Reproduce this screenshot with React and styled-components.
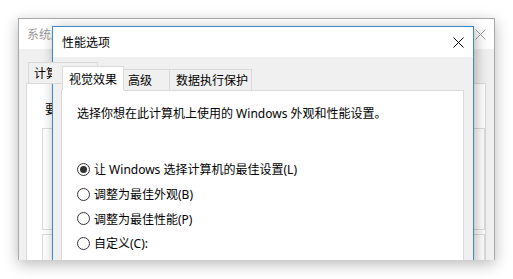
import React from "react";
import styled, { createGlobalStyle } from "styled-components";

const GlobalStyle = createGlobalStyle`
  html, body {
    margin: 0;
    padding: 0;
    background: #fff;
  }
  body {
    font-family: "Noto Sans", "Noto Sans CJK SC", sans-serif;
    font-size: 12px;
    color: #000;
  }
`;

const Stage = styled.div`
  position: relative;
  width: 513px;
  height: 279px;
  overflow: hidden;
`;

const Capture = styled.div`
  position: absolute;
  left: 18px;
  top: 18px;
  width: 477px;
  height: 242px;
  overflow: hidden;
  box-shadow: 0 4px 14px rgba(0, 0, 0, 0.28);
`;

const BackWindow = styled.div`
  display: flex;
  flex-direction: column;
  height: 100%;
  box-sizing: border-box;
  border: 1px solid #a8a8a8;
  border-bottom: none;
  background: #f0f0f0;
`;

const TitleBar = styled.div`
  display: flex;
  align-items: center;
  justify-content: space-between;
  height: ${(p) => p.$h}px;
  padding: 0 ${(p) => p.$right}px 0 ${(p) => p.$left}px;
  background: #fff;
  color: ${(p) => (p.$inactive ? "#9a9a9a" : "#000")};
  flex-shrink: 0;
`;

/* text of the back window that the front window covers: only the visible part is kept */
const Clip = styled.span`
  display: block;
  max-width: ${(p) => p.$w}px;
  overflow: hidden;
  white-space: nowrap;
`;

const Body = styled.div`
  flex: 1;
  display: flex;
  flex-direction: column;
  padding: ${(p) => p.$pad};
`;

const TabRow = styled.div`
  display: flex;
  align-items: flex-end;
  height: ${(p) => p.$h}px;
  padding-left: ${(p) => p.$indent}px;
  margin-bottom: -1px;
  position: relative;
  z-index: 1;
`;

const Tab = styled.div`
  box-sizing: border-box;
  display: flex;
  align-items: center;
  width: ${(p) => p.$w}px;
  height: ${(p) => (p.$active ? 25 : 22)}px;
  padding-left: ${(p) => p.$padl}px;
  margin-left: ${(p) => (p.$first ? 0 : -1)}px;
  background: ${(p) => (p.$active ? "#fff" : "#f0f0f0")};
  border: 1px solid #d9d9d9;
  border-bottom: ${(p) => (p.$active ? "1px solid #fff" : "1px solid #d9d9d9")};
  white-space: nowrap;
  overflow: hidden;
  position: relative;
  z-index: ${(p) => (p.$active ? 2 : 1)};
`;

const Panel = styled.div`
  flex: 1;
  background: #fff;
  border: 1px solid #d9d9d9;
  border-bottom: none;
  padding: ${(p) => p.$pad};
  display: flex;
  flex-direction: column;
`;

const GroupBox = styled.div`
  border: 1px solid #dcdcdc;
  height: ${(p) => p.$h}px;
  margin-top: ${(p) => p.$mt}px;
`;

const FrontWindow = styled.div`
  position: absolute;
  left: 34px;
  top: 8px;
  width: 422px;
  height: 240px;
  box-sizing: border-box;
  border: 1px solid #3d8ac6;
  border-bottom: none;
  background: #f0f0f0;
  display: flex;
  flex-direction: column;
  box-shadow: 2px 2px 12px rgba(0, 0, 0, 0.3);
`;

const Desc = styled.div`
  line-height: 16px;
  white-space: nowrap;
  padding-left: ${(p) => p.$indent || 0}px;
`;

const RadioList = styled.div`
  display: flex;
  flex-direction: column;
  margin-top: 35px;
`;

const RadioRow = styled.label`
  display: flex;
  align-items: center;
  gap: 4px;
  height: 24.7px;
  white-space: nowrap;
`;

const RadioDot = styled.span`
  box-sizing: border-box;
  width: 13px;
  height: 13px;
  border-radius: 50%;
  border: 1px solid #333;
  background: #fff;
  display: flex;
  align-items: center;
  justify-content: center;
  &::after {
    content: "";
    display: ${(p) => (p.$checked ? "block" : "none")};
    width: 7px;
    height: 7px;
    border-radius: 50%;
    background: #333;
  }
`;

const Close = ({ color }) => (
  <svg width="11" height="11" viewBox="0 0 11 11">
    <path d="M0.5 0.5 L10.5 10.5 M10.5 0.5 L0.5 10.5" stroke={color} strokeWidth="1" fill="none" />
  </svg>
);

const options = [
  { label: "让 Windows 选择计算机的最佳设置(L)", checked: true },
  { label: "调整为最佳外观(B)" },
  { label: "调整为最佳性能(P)" },
  { label: "自定义(C):" },
];

export default function App() {
  return (
    <Stage>
      <GlobalStyle />
      <Capture>
        <BackWindow>
          <TitleBar $h={30} $left={8} $right={8} $inactive>
            <Clip $w={25}>系统属性</Clip>
            <Close color="#a0a0a0" />
          </TitleBar>
          <Body $pad="12px 8px 0 7px">
            <TabRow $h={23} $indent={2}>
              <Tab $w={70} $padl={5} $first>
                <Clip $w={18}>计算机名</Clip>
              </Tab>
            </TabRow>
            <Panel $pad="18px 0 0 15px">
              <Desc $indent={3}>
                <Clip $w={7}>要进行大多数更改</Clip>
              </Desc>
              <GroupBox $h={100} $mt={10} />
              <GroupBox $h={30} $mt={4} />
            </Panel>
          </Body>
        </BackWindow>
        <FrontWindow>
          <TitleBar $h={30} $left={9} $right={9}>
            <span>性能选项</span>
            <Close color="#000" />
          </TitleBar>
          <Body $pad="9px 9px 0 8px">
            <TabRow $h={25} $indent={1}>
              <Tab $w={62} $padl={6} $active $first>视觉效果</Tab>
              <Tab $w={47} $padl={4}>高级</Tab>
              <Tab $w={83} $padl={6}>数据执行保护</Tab>
            </TabRow>
            <Panel $pad="15px 0 0 15px">
              <Desc>选择你想在此计算机上使用的 Windows 外观和性能设置。</Desc>
              <RadioList>
                {options.map((o) => (
                  <RadioRow key={o.label}>
                    <RadioDot $checked={o.checked} />
                    {o.label}
                  </RadioRow>
                ))}
              </RadioList>
            </Panel>
          </Body>
        </FrontWindow>
      </Capture>
    </Stage>
  );
}
